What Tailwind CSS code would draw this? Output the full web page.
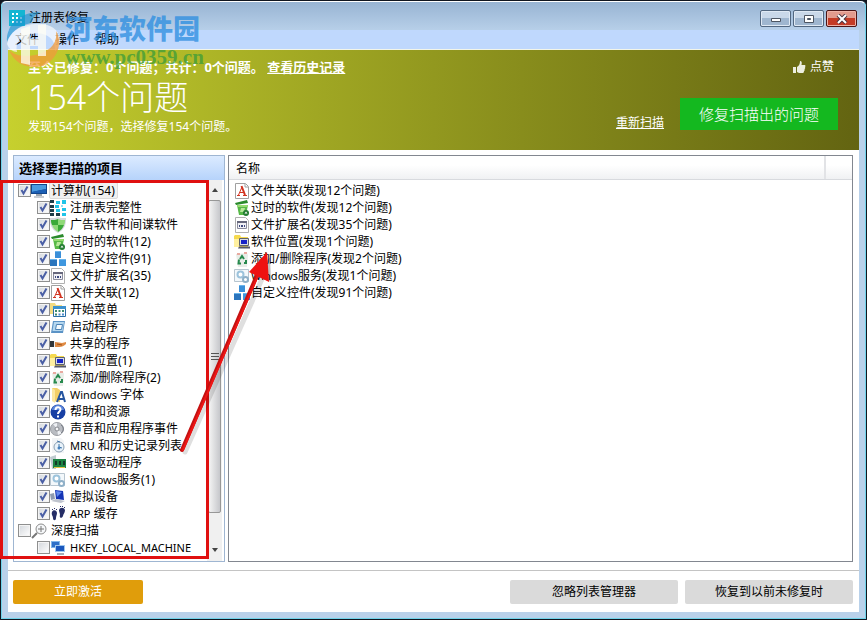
<!DOCTYPE html>
<html lang="zh-CN">
<head>
  <meta charset="UTF-8">
  <title>注册表修复</title>
  <script src="https://cdn.jsdelivr.net/npm/@tailwindcss/browser@4"></script>
</head>
<body class="bg-[#10151f] font-['Noto_Sans','Noto_Sans_CJK_SC',sans-serif] text-xs text-black">

  <!-- Icons -->
  <svg class="hidden">
    <symbol id="i-computer" viewBox="0 0 16 16"><path d="M0 1h16v10H0z" fill="#12468c"/><path d="M1 2h14v4L1 9z" fill="#4b9be0"/><path d="M1 9l14-3v4H1z" fill="#1c5fb4"/><path d="M5 11h6v2H5z" fill="#9aa3ad"/><path d="M3 13h10v2H3z" fill="#c7ccd2"/></symbol>
    <symbol id="i-registry" viewBox="0 0 16 16"><path d="M0 0h4v3H0zM0 5h4v3H0zM0 9h4v3H0zM0 13h4v3H0zM6 13h4v3H6z" fill="#1e3d48"/><path d="M6 1h4v3H6zM12 0h4v4h-4zM5 5h4v3H5zM12 8h4v3h-4zM6 9h4v3H6zM12 13h4v3h-4z" fill="#1fc4e8"/><path d="M11 5h2v2h-2z" fill="#8fe3f5"/></symbol>
    <symbol id="i-shield" viewBox="0 0 16 16"><path d="M8 0c2 1 4 1 8 1 0 7-1 11-8 15C1 12 0 8 0 1c4 0 6 0 8-1z" fill="#d5d9dc"/><path d="M8 2v6H2C1 6 1 4 1 3c3 0 5 0 7-1zM8 8h6C13 11 11 13 8 15z" fill="#3aa936"/><path d="M8 2c2 1 4 1 7 1 0 2 0 3-1 5H8zM2 8h6v7c-3-2-5-4-6-7z" fill="#8fd977"/></symbol>
    <symbol id="i-bin" viewBox="0 0 16 16"><path d="M1 3l12-3 1 3-12 2z" fill="#2b8a2c"/><path d="M3 5h11l-2 10H5z" fill="#57b947"/><path d="M3 5h11l-.5 2h-10z" fill="#96dc6f"/><path d="M7 8l4 0-1 4H6z" fill="#b8e89a"/><circle cx="12" cy="13" r="3" fill="#247c32"/><path d="M10.500 13.500l1.500-2 1.500 2z" fill="#fff"/></symbol>
    <symbol id="i-cubes" viewBox="0 0 16 16"><path d="M5 0h6v7H5z" fill="#3b8fd8"/><path d="M0 8h7v7H0z" fill="#2b75bd"/><path d="M9 8h7v7H9z" fill="#3f97df"/><path d="M5 0h6v1H5zM0 8h7v1H0zM9 8h7v1H9z" fill="#6ab4ea"/></symbol>
    <symbol id="i-ext" viewBox="0 0 16 16"><path d="M1.500.5h10l3 3v12h-13z" fill="#fff" stroke="#b0b0b0"/><path d="M3.500 4.500h9v7h-9z" fill="#f0f0f4" stroke="#8a8b9c"/><path d="M3 4h10v2H3z" fill="#66677c"/><path d="M5 8h1v2H5zM7 8h2v2H7zM10 8h1v2h-1z" fill="#3e4a80"/></symbol>
    <symbol id="i-assoc" viewBox="0 0 16 16"><path d="M1.500.5h10l3 3v12h-13z" fill="#fff" stroke="#a0a0a0"/><path d="M11 1v3h3" fill="none" stroke="#a0a0a0"/><path d="M4.500 12L8 4" fill="none" stroke="#d23320"/><path d="M7.500 3l3.500 9" fill="none" stroke="#d23320" stroke-width="2"/><path d="M6 9.500h4M3 12.500h3M9 12.500h4" fill="none" stroke="#d23320"/></symbol>
    <symbol id="i-start" viewBox="0 0 16 16"><path d="M0 1h5l1 2h6v9H0z" fill="#f4dc82"/><path d="M3.500 4.500h12v10h-12z" fill="#fff" stroke="#2a6ea6"/><path d="M3 4h13v3H3z" fill="#3d92cf"/><path d="M5 8h2v2H5zM8.500 8h2v2h-2zM12 8h2v2h-2zM5 11.500h2v2H5z" fill="#3d8a6f"/><path d="M8.500 11.500h2v2h-2zM12 11.500h2v2h-2z" fill="#4b8ccc"/></symbol>
    <symbol id="i-run" viewBox="0 0 16 16"><path d="M3 2h12l-2 12H1z" fill="#5b93c6"/><path d="M4 3h10l-1.500 9H2.500z" fill="#b5d7ef"/><path d="M6.500 5.500h6l-1 5h-6z" fill="#f5fbff" stroke="#4b83b6"/></symbol>
    <symbol id="i-hand" viewBox="0 0 16 16"><path d="M0 5h4v6H0z" fill="#33373b"/><path d="M4 5h1v6H4z" fill="#eee"/><path d="M5 6c3 0 5 1 7 1l4-1v2c-2 2-4 3-7 3H5z" fill="#e08b44"/><path d="M7 8l5 1" stroke="#a45317"/></symbol>
    <symbol id="i-location" viewBox="0 0 16 16"><path d="M0 2l1-1h5l1 2h7v10H0z" fill="#f5d94e"/><path d="M0 5h5v8H0z" fill="#fff0a0"/><path d="M5.500 4.500h9v7h-9z" fill="#d9dce4" stroke="#5d6170"/><path d="M7 6h6v4H7z" fill="#1723c8"/><path d="M5 12.500h11v2H4z" fill="#55586a"/></symbol>
    <symbol id="i-recycle" viewBox="0 0 16 16"><path d="M2 3l11-1 1 2-1 12H4z" fill="#e8ede8"/><path d="M3 2h3v2H3zM10 1h3v2h-3z" fill="#e9a9a0"/><path d="M6 8l2-3 2 3M12 9l0 3h-2M7 12.500H4.500l.5-4" fill="none" stroke="#278a4e" stroke-width="2"/></symbol>
    <symbol id="i-fonts" viewBox="0 0 16 16"><path d="M2 1h5l3 2v12l-8-1z" fill="#f3cf68"/><path d="M2 1l3 2v13l-3-2z" fill="#fbe7a1"/><path d="M7 15l4-10h1l3 10M9 12h5" fill="none" stroke="#24549f" stroke-width="2"/></symbol>
    <symbol id="i-help" viewBox="0 0 16 16"><circle cx="8" cy="8" r="7.500" fill="#173fa4"/><path d="M2 6a6 5 0 0 1 12 0z" fill="#5b86dc"/><path d="M5.500 6c0-3.500 5-3.500 5-.5C10.500 7.500 8 7.500 8 10M8 11.500v2" fill="none" stroke="#fff" stroke-width="2"/></symbol>
    <symbol id="i-sound" viewBox="0 0 16 16"><circle cx="7" cy="8" r="6.500" fill="#b9bcc2" stroke="#9a9da3"/><path d="M7 8L3 3l4-1zM7 8l5 4-4 2z" fill="#eef0f4"/><circle cx="7" cy="8" r="2" fill="#f5f5f7" stroke="#85888e"/><path d="M11 4c3 2 3 6 0 8" fill="none" stroke="#777b85"/></symbol>
    <symbol id="i-history" viewBox="0 0 16 16"><path d="M2 0h9l3 3v12H2z" fill="#f2f4f6"/><circle cx="9" cy="9" r="5" fill="#e8f2fa" stroke="#8ba0b3"/><path d="M9 6v3l3 1M7 3l3 1" fill="none" stroke="#3f74a8"/><circle cx="9" cy="10" r="1.500" fill="#4681bd"/></symbol>
    <symbol id="i-driver" viewBox="0 0 16 16"><path d="M0 2l6-2v14H2z" fill="#bfcbd0"/><path d="M3 4h13v9H3z" fill="#1c8444"/><path d="M5 6h2v4H5zM9 6h2v4H9zM13 6h2v4h-2z" fill="#123b28"/><path d="M4 12h11v1H4z" fill="#e3c649"/></symbol>
    <symbol id="i-services" viewBox="0 0 16 16"><path d="M.5 1.500h14v12H.5z" fill="#f3f8fb" stroke="#b7c5cf"/><circle cx="6.500" cy="6.500" r="3" fill="#fff" stroke="#9cc3dc" stroke-width="2"/><circle cx="11.500" cy="11.500" r="2.500" fill="#fff" stroke="#8fb0c8" stroke-width="2"/></symbol>
    <symbol id="i-virtual" viewBox="0 0 16 16"><path d="M5 1l8 1 1 9-8-1z" fill="#1534b5"/><path d="M6 2l6 1-5 5z" fill="#5f87ec"/><path d="M0 5l4-1 1 6-4 1z" fill="#8f9bb0"/><path d="M1 12l5-2 9 2-4 2z" fill="#bfc4ce"/></symbol>
    <symbol id="i-feet" viewBox="0 0 16 16"><path d="M2 6c1-3 5-2 5 1 0 2-1 3-1 5 0 3-3 3-3 0 0-2-2-3-1-6zM9 4c1-3 5-3 6 0 0 3-2 4-2 6-1 3-4 2-3-1 0-2-1-3-1-5z" fill="#252d66"/><path d="M2 3h1v1H2zM4 2h1v1H4zM6 3h1v1H6zM10 0h1v1h-1zM12 0h1v1h-1zM14 1h1v1h-1z" fill="#252d66"/></symbol>
    <symbol id="i-magnify" viewBox="0 0 16 16"><path d="M1 15l5-5" stroke="#777" stroke-width="2"/><circle cx="10" cy="6" r="5" fill="#f5f7f9" stroke="#8c8c8c"/><path d="M10 3v6M7 6h6" stroke="#777"/></symbol>
    <symbol id="i-hkey" viewBox="0 0 16 16"><path d="M1 1h9v7H1z" fill="#7fb6e8"/><path d="M2 2h7v5H2z" fill="#2c6fc8"/><path d="M5 5h10v7H5z" fill="#9fc7ee"/><path d="M6 6h8v5H6z" fill="#1957bd"/><path d="M7 13h7v2H7z" fill="#a5adb8"/></symbol>
  </svg>

  <div class="relative min-h-screen flex flex-col rounded-t-md border border-[#10151f] bg-[#b9d1ea]">
    <div class="grow flex flex-col rounded-t-md border border-[#6fd3ea] border-t-white px-[6px] pb-[6px] bg-linear-to-b from-[#98b4d3] to-[#b9d1ea] to-[30px]">

      <!-- Title bar -->
      <header class="flex items-start justify-between h-7 pl-px">
        <div class="flex items-center gap-1 pt-2">
          <svg class="size-4" viewBox="0 0 16 16"><path d="M0 0h16v16H0z" fill="#13b5d2"/><path d="M3 3h2v2H3zM7 3h2v2H7zM3 7h2v2H3zM7 7h2v2H7zM11 7h2v2h-2zM3 11h2v2H3zM7 11h2v2H7zM11 11h2v2h-2z" fill="#fff"/></svg>
          <h1>注册表修复</h1>
        </div>
        <div class="flex gap-[2px] pt-2 pr-[2px]">
          <button aria-label="最小化" class="grid place-items-center w-[31px] h-[17px] rounded-xs border border-[#526780] bg-linear-to-b from-[#c9d8e9] from-50% to-[#9fb6cf] to-50% shadow-[inset_0_0_0_1px_#dfe9f4]">
            <svg class="w-3 h-2" viewBox="0 0 12 8"><path d="M1.500 3.500h9v3h-9z" fill="#fff" stroke="#4c5562"/></svg>
          </button>
          <button aria-label="最大化" class="grid place-items-center w-[31px] h-[17px] rounded-xs border border-[#526780] bg-linear-to-b from-[#c9d8e9] from-50% to-[#9fb6cf] to-50% shadow-[inset_0_0_0_1px_#dfe9f4]">
            <svg class="w-3 h-[10px]" viewBox="0 0 12 10"><path d="M1.500 1.500h9v7h-9z" fill="#fff" stroke="#4c5562"/><path d="M4.500 4.500h3v1h-3z" fill="#9fb6cf" stroke="#4c5562"/></svg>
          </button>
          <button aria-label="关闭" class="grid place-items-center w-[31px] h-[17px] rounded-xs border border-[#4b1516] bg-linear-to-b from-[#e29b8e] from-50% to-[#c43b25] to-50% shadow-[inset_0_0_0_1px_#eeb2a6]">
            <svg class="w-3 h-[10px]" viewBox="0 0 12 10"><path d="M2 1l8 8M10 1L2 9" stroke="#4c3540" stroke-width="4"/><path d="M2 1l8 8M10 1L2 9" stroke="#fff" stroke-width="2"/></svg>
          </button>
        </div>
      </header>

      <div class="grow flex flex-col bg-white">
        <nav class="flex items-center gap-4 h-5 px-[7px] bg-[#bfd8fd] border-b border-[#f3f5e8]">
          <button>文件</button>
          <button>操作</button>
          <button>帮助</button>
        </nav>

        <!-- Summary banner -->
        <section class="flex justify-between h-[100px] pl-5 pr-[21px] text-white bg-linear-to-r from-[#c6d02e] via-[#92981f] via-50% to-[#636411]">
          <div class="pt-2">
            <p class="text-[13px] leading-[18px] font-bold">至今已修复：0个问题；共计：0个问题。 <a href="#" class="underline">查看历史记录</a></p>
            <p class="text-[34px] leading-[42px] font-light">154个问题</p>
            <p class="leading-[18px]">发现154个问题，选择修复154个问题。</p>
          </div>
          <div class="flex flex-col items-end justify-between pt-2 pb-5">
            <button class="flex items-center gap-1 pr-1 leading-[18px]">
              <svg class="size-[14px]" viewBox="0 0 14 14" fill="#eceee0"><path d="M1 7h3v6H1zM5 7c2-1 3-3 3-6 2 0 2 2 1.500 4H13c1 1 0 2 0 2 .5 1 0 2-.5 2 .5 1 0 2-.5 2 0 1-.5 2-1 2H7l-2-1z"/></svg>
              点赞
            </button>
            <div class="flex items-end gap-4">
              <a href="#" class="underline leading-[14px]">重新扫描</a>
              <button class="w-[158px] h-8 bg-[#14b81f] text-[15px] font-light">修复扫描出的问题</button>
            </div>
          </div>
        </section>

        <main class="grow grid grid-cols-[212px_1fr] gap-[3px] pl-[5px] pr-[6px] pt-[5px] pb-2">
          <section class="flex flex-col border border-[#9fb6d2]">
            <h2 class="h-6 px-[5px] leading-6 text-[13px] font-bold bg-linear-to-b from-[#dcebff] to-[#b6d3fb]">选择要扫描的项目</h2>
            <div class="grow flex">
              <ul id="arvore" class="grow pt-[2px]"></ul>
              <!-- Scrollbar -->
              <div class="flex flex-col items-center w-[15px] mr-[2px] bg-[#f0f0f0]">
                <svg class="w-2 h-5" viewBox="0 0 8 20"><path d="M1 12l3-4 3 4z" fill="#444"/></svg>
                <div class="grow w-[13px] grid place-items-center rounded-xs border border-[#979797] bg-linear-to-r from-[#f4f4f4] to-[#c6c7cb]">
                  <svg class="w-2 h-[9px]" viewBox="0 0 8 9"><path d="M0 1.500h8M0 4.500h8M0 7.500h8" stroke="#555"/></svg>
                </div>
                <svg class="w-2 h-12" viewBox="0 0 8 48"><path d="M1 35l3 4 3-4z" fill="#444"/></svg>
              </div>
            </div>
          </section>

          <section class="border border-[#828790]">
            <div class="flex h-6 bg-linear-to-b from-white from-40% to-[#f0f1f3] border-b border-[#d8dade]">
              <h2 class="grow pl-[7px] leading-[26px] border-r-2 border-[#e2e3e6]">名称</h2>
              <span class="w-[26px]"></span>
            </div>
            <ul id="resultados" class="pl-[5px] pt-[2px]"></ul>
          </section>
        </main>

        <footer class="flex items-center gap-[7px] h-[42px] pl-[5px] pr-[6px] border-t border-[#c4c4c4]">
          <button class="w-[130px] h-6 mr-auto rounded-xs bg-[#e09d0b] text-white">立即激活</button>
          <button class="w-[168px] h-6 rounded-xs bg-[#dadada]">忽略列表管理器</button>
          <button class="w-[168px] h-6 rounded-xs bg-[#dadada]">恢复到以前未修复时</button>
        </footer>
      </div>
    </div>

    <!-- Watermark -->
    <div class="absolute left-1 top-2 flex gap-[2px] pointer-events-none">
      <svg class="w-[58px] h-[60px]" viewBox="0 0 58 60">
        <path d="M2 33C1 16 14 3 36 3c-5 2-8 5-10 11C13 17 5 24 2 33z" fill="#1b93d0" opacity=".65"/>
        <path d="M2 35c2-9 8-15 17-18 18-6 35 0 36 13 0 5-2 9-5 12 1-13-10-20-25-17-10 2-15 8-13 18-4 0-8-3-10-8z" fill="#fff" opacity=".65"/>
        <path d="M4 41c6 6 16 7 26 5 14-3 23-11 21-24 7 12 2 28-13 35-14 3-28-1-34-16z" fill="#f09a3c" opacity=".75"/>
        <path d="M16 20l9-3v13h8V16l8-1v32h-8V37h-8v19l-9-2z" fill="#fffef4" opacity=".75"/>
      </svg>
      <div class="pt-1">
        <p class="text-[27px] leading-[31px] font-black text-[#2a8de0]/75">河东软件园</p>
        <p class="font-['Liberation_Serif',serif] text-[21px] leading-[26px] font-bold text-[#3c9c3a]/75">www.pc0359.cn</p>
      </div>
    </div>

    <!-- Annotation: scanned items point to the result list -->
    <div class="absolute -left-px top-[179px] w-[209px] h-[379px] border-3 border-[#e01010] pointer-events-none"></div>
    <svg class="absolute left-[175px] top-[246px] w-[105px] h-[212px] pointer-events-none" viewBox="0 0 105 212">
      <g opacity=".12" stroke="#000" stroke-linecap="round"><path d="M9 205L86 32" stroke-width="5"/><path d="M9 205L86 32" stroke-width="3"/></g>
      <path d="M94 10L80 29l15 6z" opacity=".25"/>
      <path d="M6 203L82 26" stroke="#c41212" stroke-width="4" stroke-linecap="round"/>
      <path d="M7 203L83 26" stroke="#ee1515" stroke-width="2" stroke-linecap="round"/>
      <path d="M91 5L73 25l20 10z" fill="#ee1111"/>
    </svg>
  </div>

  <script>
    const itens = [
      { nome: '计算机(154)', icone: 'computer', raiz: true, marcado: true, ativo: true },
      { nome: '注册表完整性', icone: 'registry', marcado: true },
      { nome: '广告软件和间谍软件', icone: 'shield', marcado: true },
      { nome: '过时的软件(12)', icone: 'bin', marcado: true },
      { nome: '自定义控件(91)', icone: 'cubes', marcado: true },
      { nome: '文件扩展名(35)', icone: 'ext', marcado: true },
      { nome: '文件关联(12)', icone: 'assoc', marcado: true },
      { nome: '开始菜单', icone: 'start', marcado: true },
      { nome: '启动程序', icone: 'run', marcado: true },
      { nome: '共享的程序', icone: 'hand', marcado: true },
      { nome: '软件位置(1)', icone: 'location', marcado: true },
      { nome: '添加/删除程序(2)', icone: 'recycle', marcado: true },
      { nome: 'Windows 字体', icone: 'fonts', marcado: true },
      { nome: '帮助和资源', icone: 'help', marcado: true },
      { nome: '声音和应用程序事件', icone: 'sound', marcado: true },
      { nome: 'MRU 和历史记录列表', icone: 'history', marcado: true },
      { nome: '设备驱动程序', icone: 'driver', marcado: true },
      { nome: 'Windows服务(1)', icone: 'services', marcado: true },
      { nome: '虚拟设备', icone: 'virtual', marcado: true },
      { nome: 'ARP 缓存', icone: 'feet', marcado: true },
      { nome: '深度扫描', icone: 'magnify', raiz: true },
      { nome: 'HKEY_LOCAL_MACHINE', icone: 'hkey' }
    ];

    const resultados = [
      ['文件关联(发现12个问题)', 'assoc'],
      ['过时的软件(发现12个问题)', 'bin'],
      ['文件扩展名(发现35个问题)', 'ext'],
      ['软件位置(发现1个问题)', 'location'],
      ['添加/删除程序(发现2个问题)', 'recycle'],
      ['Windows服务(发现1个问题)', 'services'],
      ['自定义控件(发现91个问题)', 'cubes']
    ];

    // Latin words are set one size smaller than the Chinese text
    function formatarNome(nome) {
      return nome.replace(/[A-Za-z_]+/g, '<span class="text-[11px]">$&</span>');
    }

    document.getElementById('arvore').innerHTML = itens.map(item => `
      <li class="${item.raiz ? 'pl-1' : 'pl-[23px]'}">
        <label class="flex items-center h-[17px] whitespace-nowrap">
          <span class="grid size-[13px] shrink-0">
            <input type="checkbox" ${item.marcado ? 'checked' : ''} class="peer col-start-1 row-start-1 appearance-none size-[13px] border border-[#8e8f8f] bg-linear-to-br from-[#d3d7dc] to-white shadow-[inset_0_0_0_1px_#f4f4f4]">
            <svg class="col-start-1 row-start-1 size-[13px] invisible peer-checked:visible pointer-events-none" viewBox="0 0 13 13"><path d="M3.500 6l2 3.500 4-7" fill="none" stroke="#4a5fa5" stroke-width="2"/></svg>
          </span>
          <svg class="size-4 shrink-0"><use href="#i-${item.icone}"/></svg>
          <span class="${item.ativo ? 'ml-[2px] pl-px pr-[2px] leading-[15px] rounded-xs border border-[#dcdcdc] bg-[#f0f0f0]' : 'ml-1'}">${formatarNome(item.nome)}</span>
        </label>
      </li>`).join('');

    document.getElementById('resultados').innerHTML = resultados.map(([nome, icone]) => `
      <li class="flex items-center gap-px h-[17px] whitespace-nowrap">
        <svg class="size-4 shrink-0"><use href="#i-${icone}"/></svg>
        <span>${formatarNome(nome)}</span>
      </li>`).join('');
  </script>
</body>
</html>
